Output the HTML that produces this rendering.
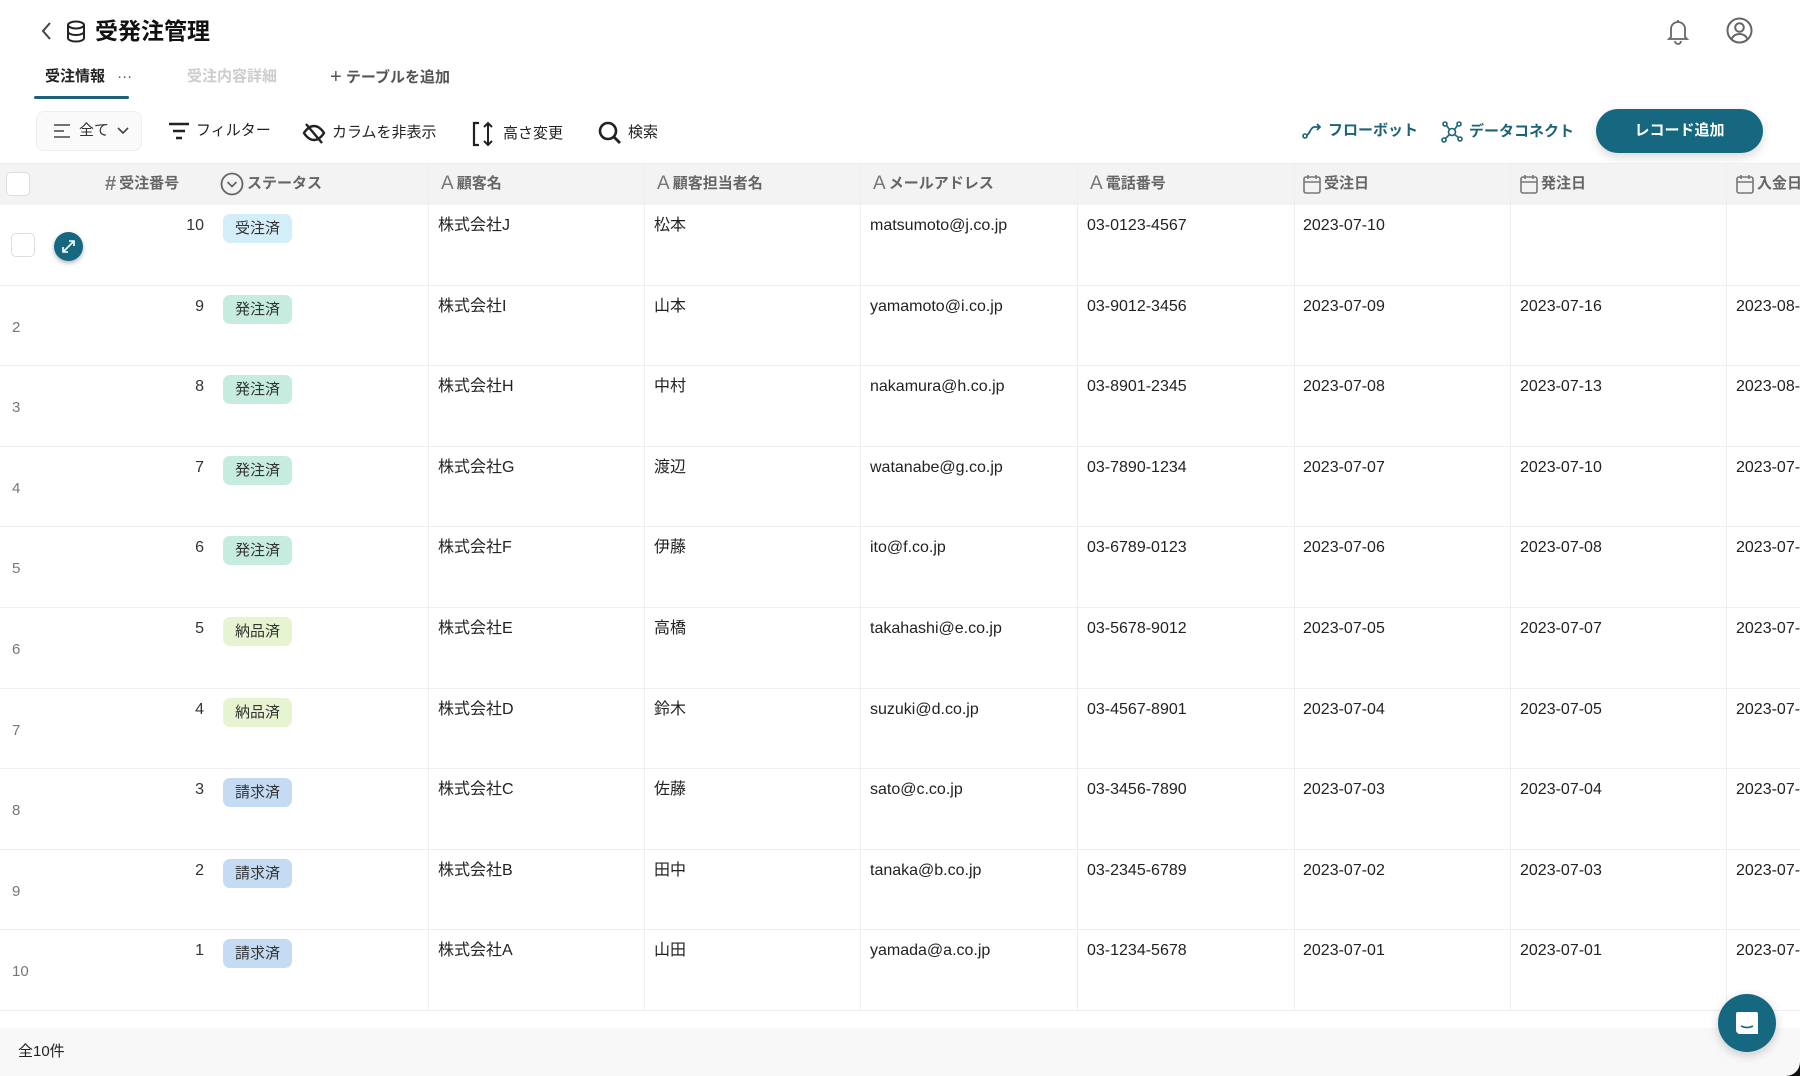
<!DOCTYPE html>
<html><head><meta charset="utf-8"><style>
*{margin:0;padding:0;box-sizing:border-box}
body{width:1800px;height:1076px;overflow:hidden;background:#fff;font-family:"Liberation Sans","Noto Sans CJK JP",sans-serif;color:#222;position:relative;line-height:20px}
.a{position:absolute;white-space:nowrap}
.row{position:absolute;left:0;width:1800px;height:80.6px;border-bottom:1px solid #efefef;white-space:nowrap}
.row .i{position:absolute;left:12px;top:32px;font-size:15px;color:#777;line-height:20px}
.row .n{position:absolute;left:150px;width:54px;text-align:right;top:11px;font-size:16px;color:#333;line-height:20px}
.row .b{position:absolute;left:223px;top:9px;width:69px;height:29px;border-radius:7px;font-size:15px;text-align:center;line-height:29px;color:#333}
.row .c{position:absolute;top:11px;font-size:16px;color:#222;line-height:20px;white-space:nowrap}
.vl{position:absolute;top:163px;height:847px;width:1px;background:#eee}
.h{position:absolute;top:163px;height:42px;font-size:15px;color:#666;font-weight:bold;display:flex;align-items:center;gap:3px;white-space:nowrap}
.ju{background:#d3eef8}.ha{background:#c6ece0}.no{background:#e7f4d2}.se{background:#c5dbf3}
.tb{position:absolute;top:121px;font-size:15px;color:#222;display:flex;align-items:center;gap:6px;white-space:nowrap}
</style></head><body>
<svg class="a" style="left:40px;top:21px" width="14" height="20" viewBox="0 0 14 20"><path d="M10 2 L3 10 L10 18" fill="none" stroke="#444" stroke-width="2"/></svg>
<svg class="a" style="left:66px;top:20px" width="20" height="23" viewBox="0 0 20 23"><ellipse cx="10" cy="5" rx="8" ry="3.5" fill="none" stroke="#222" stroke-width="2"/><path d="M2 5v13c0 2 3.5 3.5 8 3.5s8-1.5 8-3.5V5M2 11.5c0 2 3.5 3.5 8 3.5s8-1.5 8-3.5" fill="none" stroke="#222" stroke-width="2"/></svg>
<div class="a" style="left:95px;top:16px;font-size:23px;line-height:30px;font-weight:bold;color:#111">受発注管理</div>
<svg class="a" style="left:1666px;top:17px" width="24" height="28" viewBox="0 0 24 28"><path d="M12 3v2M5 20V12a7 7 0 0 1 14 0v8l2 2H3z" fill="none" stroke="#666" stroke-width="1.8"/><path d="M9 24a3 3 0 0 0 6 0" fill="none" stroke="#666" stroke-width="1.8"/></svg>
<svg class="a" style="left:1726px;top:17px" width="27" height="27" viewBox="0 0 27 27"><circle cx="13.5" cy="13.5" r="12" fill="none" stroke="#666" stroke-width="2"/><circle cx="13.5" cy="10.5" r="4.3" fill="none" stroke="#666" stroke-width="2"/><path d="M5.5 22c2-4 5-5 8-5s6 1 8 5" fill="none" stroke="#666" stroke-width="2"/></svg>
<div class="a" style="left:45px;top:67px;font-size:15px;font-weight:bold;color:#222">受注情報 <span style="margin-left:8px;font-weight:normal;color:#555">···</span></div>
<div class="a" style="left:34px;top:96px;width:95px;height:3px;background:#1c6379;border-radius:2px"></div>
<div class="a" style="left:187px;top:67px;font-size:15px;font-weight:bold;color:#ccc">受注内容詳細</div>
<div class="a" style="left:330px;top:67px;font-size:15px;font-weight:bold;color:#555"><span style="font-size:20px;font-weight:normal;vertical-align:-1px">+</span> テーブルを追加</div>
<div class="a" style="left:36px;top:111px;width:106px;height:40px;border:1px solid #eee;border-radius:8px;background:#fafafa;font-size:15px;color:#333;display:flex;align-items:center;padding-left:16px;gap:8px">
<svg width="18" height="14" viewBox="0 0 18 14"><path d="M1 1h16M1 7h10M1 13h16" stroke="#444" stroke-width="1.6"/></svg>全て<svg width="12" height="8" viewBox="0 0 12 8"><path d="M1 1l5 5 5-5" fill="none" stroke="#444" stroke-width="1.6"/></svg></div>
<div class="tb" style="left:168px"><svg width="22" height="18" viewBox="0 0 22 18"><path d="M1 2h20M5 9h12M8 16h6" stroke="#222" stroke-width="2.4"/></svg>フィルター</div>
<div class="tb" style="left:302px"><svg width="24" height="24" viewBox="0 0 24 24"><path d="M2 12s4-7 10-7 10 7 10 7-4 7-10 7S2 12 2 12z" fill="none" stroke="#222" stroke-width="2.4"/><path d="M4 3l16 19" stroke="#222" stroke-width="2.4"/></svg>カラムを非表示</div>
<div class="tb" style="left:471px"><svg width="26" height="26" viewBox="0 0 26 26"><path d="M8 2H3v22h5" fill="none" stroke="#222" stroke-width="2.2"/><path d="M17 2v22M13 6l4-4 4 4M13 20l4 4 4-4" fill="none" stroke="#222" stroke-width="2"/></svg>高さ変更</div>
<div class="tb" style="left:598px"><svg width="24" height="24" viewBox="0 0 24 24"><circle cx="10" cy="10" r="8" fill="none" stroke="#222" stroke-width="2.6"/><path d="M16 16l6 6" stroke="#222" stroke-width="2.8"/></svg>検索</div>
<div class="tb" style="left:1302px;color:#1c6379;font-weight:bold"><svg width="20" height="16" viewBox="0 0 20 16"><circle cx="3" cy="13" r="2" fill="none" stroke="#1c6379" stroke-width="1.6"/><path d="M5 12c3-1 3-7 7-8h6M15 1l3 3-3 3" fill="none" stroke="#1c6379" stroke-width="1.8"/></svg>フローボット</div>
<div class="tb" style="left:1441px;color:#1c6379;font-weight:bold"><svg width="22" height="22" viewBox="0 0 22 22" fill="none" stroke="#1c6379" stroke-width="1.6"><circle cx="11" cy="11" r="3.5"/><circle cx="4" cy="3" r="2"/><circle cx="18" cy="3" r="2"/><circle cx="3" cy="19" r="2"/><circle cx="19" cy="18" r="2"/><path d="M5.5 4.5l3 4M16.5 4.5l-3 4M4.5 17.5l4-4M17.5 16.5l-4-3"/></svg>データコネクト</div>
<div class="a" style="left:1596px;top:109px;width:167px;height:44px;border-radius:22px;background:#15687f;color:#fff;font-size:15px;font-weight:bold;text-align:center;line-height:44px;box-shadow:0 4px 10px rgba(0,0,0,.15)">レコード追加</div>
<div class="a" style="left:0;top:163px;width:1800px;height:42px;background:#f3f3f3;border-top:1px solid #eee"></div>
<div class="a" style="left:6px;top:172px;width:24px;height:24px;border:1px solid #ddd;border-radius:5px;background:#fff"></div>
<div class="h" style="left:105px"><span style="font-size:20px;color:#777">#</span>受注番号</div>
<div class="h" style="left:220px"><svg width="24" height="24" viewBox="0 0 24 24"><circle cx="12" cy="12" r="10.5" fill="none" stroke="#666" stroke-width="1.8"/><path d="M7.5 10l4.5 4.5 4.5-4.5" fill="none" stroke="#666" stroke-width="1.8"/></svg>ステータス</div>
<div class="h" style="left:441px"><span style="font-size:19px;font-weight:normal;color:#777">A</span> 顧客名</div>
<div class="h" style="left:657px"><span style="font-size:19px;font-weight:normal;color:#777">A</span> 顧客担当者名</div>
<div class="h" style="left:873px"><span style="font-size:19px;font-weight:normal;color:#777">A</span> メールアドレス</div>
<div class="h" style="left:1090px"><span style="font-size:19px;font-weight:normal;color:#777">A</span> 電話番号</div>
<div class="h" style="left:1303px"><svg width="18" height="20" viewBox="0 0 18 20"><rect x="1" y="3" width="16" height="16" rx="2" fill="none" stroke="#777" stroke-width="1.6"/><path d="M1 8h16M5 1v4M13 1v4" stroke="#777" stroke-width="1.6"/></svg>受注日</div>
<div class="h" style="left:1520px"><svg width="18" height="20" viewBox="0 0 18 20"><rect x="1" y="3" width="16" height="16" rx="2" fill="none" stroke="#777" stroke-width="1.6"/><path d="M1 8h16M5 1v4M13 1v4" stroke="#777" stroke-width="1.6"/></svg>発注日</div>
<div class="h" style="left:1736px"><svg width="18" height="20" viewBox="0 0 18 20"><rect x="1" y="3" width="16" height="16" rx="2" fill="none" stroke="#777" stroke-width="1.6"/><path d="M1 8h16M5 1v4M13 1v4" stroke="#777" stroke-width="1.6"/></svg>入金日</div>
<div class="row" style="top:205px"><div class="a" style="left:11px;top:28px;width:24px;height:24px;border:1px solid #ddd;border-radius:5px"></div><div class="a" style="left:54px;top:27px;width:29px;height:29px;border-radius:50%;background:#15687f;box-shadow:0 2px 5px rgba(0,0,0,.3)"><svg width="29" height="29" viewBox="0 0 29 29"><path d="M9 20l11-11M9 15v5h5M15 9h5v5" fill="none" stroke="#fff" stroke-width="1.6"/></svg></div><span class="n">10</span><span class="b ju">受注済</span><span class="c" style="left:438px">株式会社J</span><span class="c" style="left:654px">松本</span><span class="c" style="left:870px">matsumoto@j.co.jp</span><span class="c" style="left:1087px">03-0123-4567</span><span class="c" style="left:1303px">2023-07-10</span></div>
<div class="row" style="top:285.6px"><span class="i">2</span><span class="n">9</span><span class="b ha">発注済</span><span class="c" style="left:438px">株式会社I</span><span class="c" style="left:654px">山本</span><span class="c" style="left:870px">yamamoto@i.co.jp</span><span class="c" style="left:1087px">03-9012-3456</span><span class="c" style="left:1303px">2023-07-09</span><span class="c" style="left:1520px">2023-07-16</span><span class="c" style="left:1736px">2023-08-</span></div>
<div class="row" style="top:366.2px"><span class="i">3</span><span class="n">8</span><span class="b ha">発注済</span><span class="c" style="left:438px">株式会社H</span><span class="c" style="left:654px">中村</span><span class="c" style="left:870px">nakamura@h.co.jp</span><span class="c" style="left:1087px">03-8901-2345</span><span class="c" style="left:1303px">2023-07-08</span><span class="c" style="left:1520px">2023-07-13</span><span class="c" style="left:1736px">2023-08-</span></div>
<div class="row" style="top:446.8px"><span class="i">4</span><span class="n">7</span><span class="b ha">発注済</span><span class="c" style="left:438px">株式会社G</span><span class="c" style="left:654px">渡辺</span><span class="c" style="left:870px">watanabe@g.co.jp</span><span class="c" style="left:1087px">03-7890-1234</span><span class="c" style="left:1303px">2023-07-07</span><span class="c" style="left:1520px">2023-07-10</span><span class="c" style="left:1736px">2023-07-</span></div>
<div class="row" style="top:527.4px"><span class="i">5</span><span class="n">6</span><span class="b ha">発注済</span><span class="c" style="left:438px">株式会社F</span><span class="c" style="left:654px">伊藤</span><span class="c" style="left:870px">ito@f.co.jp</span><span class="c" style="left:1087px">03-6789-0123</span><span class="c" style="left:1303px">2023-07-06</span><span class="c" style="left:1520px">2023-07-08</span><span class="c" style="left:1736px">2023-07-</span></div>
<div class="row" style="top:608px"><span class="i">6</span><span class="n">5</span><span class="b no">納品済</span><span class="c" style="left:438px">株式会社E</span><span class="c" style="left:654px">高橋</span><span class="c" style="left:870px">takahashi@e.co.jp</span><span class="c" style="left:1087px">03-5678-9012</span><span class="c" style="left:1303px">2023-07-05</span><span class="c" style="left:1520px">2023-07-07</span><span class="c" style="left:1736px">2023-07-</span></div>
<div class="row" style="top:688.6px"><span class="i">7</span><span class="n">4</span><span class="b no">納品済</span><span class="c" style="left:438px">株式会社D</span><span class="c" style="left:654px">鈴木</span><span class="c" style="left:870px">suzuki@d.co.jp</span><span class="c" style="left:1087px">03-4567-8901</span><span class="c" style="left:1303px">2023-07-04</span><span class="c" style="left:1520px">2023-07-05</span><span class="c" style="left:1736px">2023-07-</span></div>
<div class="row" style="top:769.2px"><span class="i">8</span><span class="n">3</span><span class="b se">請求済</span><span class="c" style="left:438px">株式会社C</span><span class="c" style="left:654px">佐藤</span><span class="c" style="left:870px">sato@c.co.jp</span><span class="c" style="left:1087px">03-3456-7890</span><span class="c" style="left:1303px">2023-07-03</span><span class="c" style="left:1520px">2023-07-04</span><span class="c" style="left:1736px">2023-07-</span></div>
<div class="row" style="top:849.8px"><span class="i">9</span><span class="n">2</span><span class="b se">請求済</span><span class="c" style="left:438px">株式会社B</span><span class="c" style="left:654px">田中</span><span class="c" style="left:870px">tanaka@b.co.jp</span><span class="c" style="left:1087px">03-2345-6789</span><span class="c" style="left:1303px">2023-07-02</span><span class="c" style="left:1520px">2023-07-03</span><span class="c" style="left:1736px">2023-07-</span></div>
<div class="row" style="top:930.4px"><span class="i">10</span><span class="n">1</span><span class="b se">請求済</span><span class="c" style="left:438px">株式会社A</span><span class="c" style="left:654px">山田</span><span class="c" style="left:870px">yamada@a.co.jp</span><span class="c" style="left:1087px">03-1234-5678</span><span class="c" style="left:1303px">2023-07-01</span><span class="c" style="left:1520px">2023-07-01</span><span class="c" style="left:1736px">2023-07-</span></div>
<div class="vl" style="left:428px"></div><div class="vl" style="left:644px"></div><div class="vl" style="left:860px"></div><div class="vl" style="left:1077px"></div><div class="vl" style="left:1294px"></div><div class="vl" style="left:1510px"></div><div class="vl" style="left:1726px"></div>
<div class="a" style="left:0;top:1028px;width:1800px;height:48px;background:#f8f8f8"></div>
<div class="a" style="left:18px;top:1042px;font-size:15px;color:#222">全10件</div>
<div class="a" style="left:1718px;top:994px;width:58px;height:58px;border-radius:50%;background:#15687f;box-shadow:0 3px 10px rgba(0,0,0,.2)"><svg width="58" height="58" viewBox="0 0 58 58"><path d="M20 18h18a2 2 0 0 1 2 2v20h-18a4 4 0 0 1-4-4V20a2 2 0 0 1 2-2z" fill="#fff"/><path d="M23 32c4 2 8 2 12 0" fill="none" stroke="#15687f" stroke-width="1.8"/></svg></div>
<div class="a" style="left:1786px;top:1062px;width:14px;height:14px;background:#111;clip-path:path('M14 0V14H0A14 14 0 0 0 14 0z')"></div>
</body></html>
